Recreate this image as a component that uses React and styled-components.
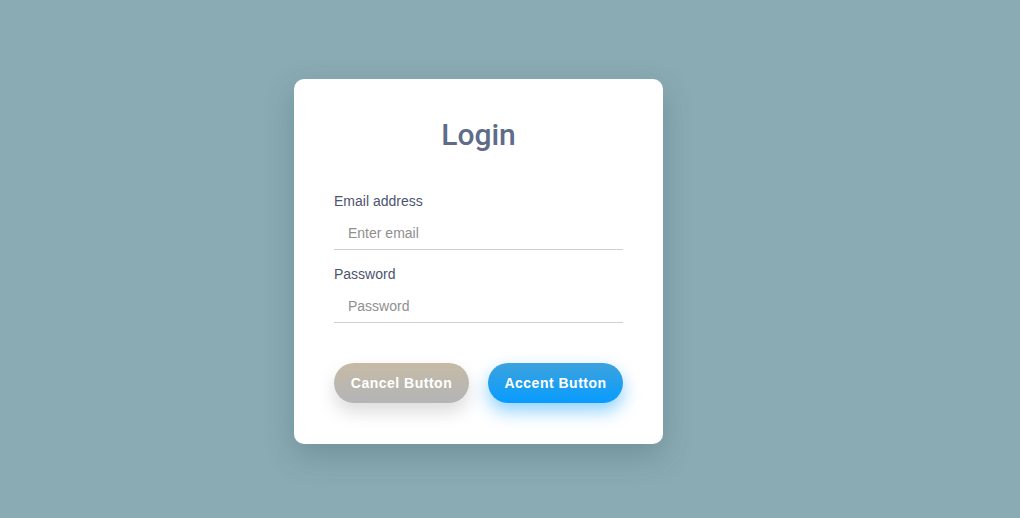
import React from "react";
import styled, { createGlobalStyle } from "styled-components";

const Global = createGlobalStyle`
  html, body { margin: 0; padding: 0; }
  body {
    background: #8aabb3;
    font-family: "Liberation Sans", Arial, sans-serif;
  }
`;

const Page = styled.div`
  width: 1020px;
  height: 518px;
  display: flex;
  justify-content: center;
  align-items: flex-start;
  padding: 79px 63px 0 0;
  box-sizing: border-box;
`;

const Card = styled.form`
  width: 369px;
  box-sizing: border-box;
  background: #fff;
  border-radius: 10px;
  padding: 39px 40px 41px;
  display: flex;
  flex-direction: column;
  box-shadow: 0 12px 30px rgba(40, 70, 80, 0.25);
`;

const Title = styled.h1`
  margin: 0;
  font-family: Roboto, "Liberation Sans", Arial, sans-serif;
  font-size: 30px;
  line-height: 34px;
  font-weight: 500;
  text-align: center;
  color: #5e6b89;
`;

const Field = styled.div`
  display: flex;
  flex-direction: column;
  margin-top: ${(p) => p.$top}px;
`;

const Label = styled.label`
  font-size: 14px;
  line-height: 16px;
  color: #4d5470;
`;

const Input = styled.input`
  margin-top: 8px;
  border: none;
  border-bottom: 1px solid #cfcfcf;
  padding: 8px 14px;
  font-family: inherit;
  font-size: 14px;
  line-height: 16px;
  height: 33px;
  box-sizing: border-box;
  color: #333;
  outline: none;
  background: transparent;
  &::placeholder { color: #8f8f8f; }
`;

const Actions = styled.div`
  margin-top: 40px;
  display: flex;
  justify-content: space-between;
`;

const Button = styled.button`
  width: 135px;
  height: 40px;
  border: none;
  border-radius: 20px;
  font-family: inherit;
  font-size: 14px;
  font-weight: 700;
  letter-spacing: 0.5px;
  color: #fff;
  cursor: pointer;
  background: ${(p) =>
    p.$accent
      ? "linear-gradient(180deg, #3da2dd 0%, #079cff 100%)"
      : "linear-gradient(180deg, #c6baa5 0%, #b3b5b7 100%)"};
  box-shadow: ${(p) =>
    p.$accent
      ? "0 8px 18px rgba(0, 150, 255, 0.45)"
      : "0 9px 18px rgba(0, 0, 0, 0.14)"};
`;

export default function App() {
  return (
    <>
      <Global />
      <Page>
        <Card onSubmit={(e) => e.preventDefault()}>
          <Title>Login</Title>
          <Field $top={41}>
            <Label>Email address</Label>
            <Input type="email" placeholder="Enter email" />
          </Field>
          <Field $top={16}>
            <Label>Password</Label>
            <Input type="password" placeholder="Password" />
          </Field>
          <Actions>
            <Button type="button">Cancel Button</Button>
            <Button type="submit" $accent>Accent Button</Button>
          </Actions>
        </Card>
      </Page>
    </>
  );
}
